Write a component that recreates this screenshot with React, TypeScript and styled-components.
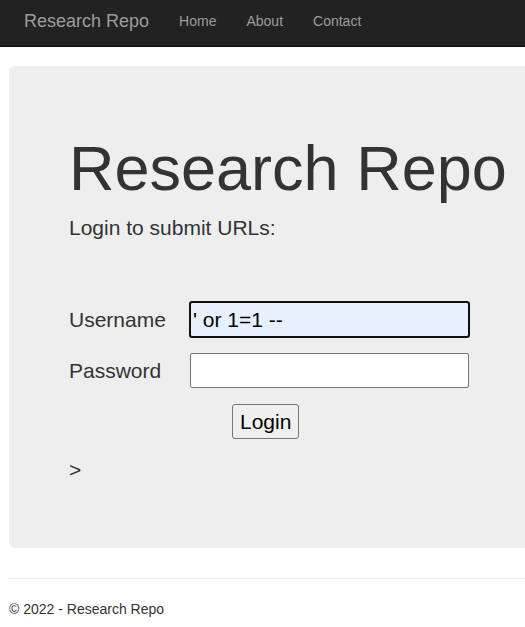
import React from "react";
import styled, { createGlobalStyle } from "styled-components";

const Global = createGlobalStyle`
  html, body { margin: 0; padding: 0; overflow-x: hidden; }
  body {
    font-family: "Liberation Sans", Arial, Helvetica, sans-serif;
    font-size: 14px;
    line-height: 1.42857;
    color: #333;
    background: #fff;
  }
  * { box-sizing: border-box; }
`;

const Navbar = styled.nav`
  height: 47px;
  background: #222;
  border-bottom: 1px solid #080808;
  display: flex;
  align-items: center;
  padding-left: 9px;
`;

const Brand = styled.a`
  font-size: 18px;
  color: #9d9d9d;
  padding: 0 15px;
  text-decoration: none;
  line-height: 20px;
  margin-top: -4px;
`;

const NavLink = styled.a`
  font-size: 14px;
  color: #9d9d9d;
  padding: 0 15px;
  text-decoration: none;
  line-height: 20px;
  margin-top: -4px;
`;

const Container = styled.div`
  padding-left: 9px;
  width: 560px;
`;

const Jumbotron = styled.div`
  margin-top: 19px;
  background: #eee;
  border-radius: 6px;
  padding: 48px 60px 43px 60px;
`;

const Title = styled.h1`
  font-size: 63px;
  font-weight: 500;
  line-height: 1.1;
  margin: 20px 0 10px;
  color: #333;
  white-space: nowrap;
`;

const Lead = styled.p`
  font-size: 21px;
  font-weight: 200;
  margin: 0 0 15px;
`;

const Form = styled.form`
  margin-top: 59px;
  display: grid;
  grid-template-columns: 121px 279px;
  row-gap: 16px;
  align-items: center;
  font-size: 21px;
`;

const Label = styled.label`
  font-size: 21px;
`;

const Input = styled.input<{ $focused?: boolean }>`
  width: 279px;
  height: 35px;
  font-family: "Liberation Sans", Arial, sans-serif;
  font-size: 21px;
  padding: 1px 2px;
  color: #000;
  border-radius: 2px;
  border: 1px solid #767676;
  background: ${(p) => (p.$focused ? "#e8f0fe" : "#fff")};
  outline: ${(p) => (p.$focused ? "2px solid #101010" : "none")};
  outline-offset: -1px;
`;

const ButtonCell = styled.div`
  grid-column: 2;
  padding-left: 42px;
`;

const Button = styled.button`
  font-family: "Liberation Sans", Arial, sans-serif;
  font-size: 21px;
  height: 35px;
  padding: 1px 7px;
  background: #efefef;
  color: #000;
  border: 1px solid #767676;
  border-radius: 3px;
`;

const Result = styled.div`
  font-size: 21px;
  margin-top: 16px;
  margin-bottom: 20px;
`;

const Rule = styled.hr`
  border: 0;
  border-top: 1px solid #eee;
  margin: 30px 0 21px;
`;

const Footer = styled.footer`
  font-size: 14px;
  p { margin: 0; }
`;

export default function App() {
  return (
    <>
      <Global />
      <Navbar>
        <Brand href="#">Research Repo</Brand>
        <NavLink href="#">Home</NavLink>
        <NavLink href="#">About</NavLink>
        <NavLink href="#">Contact</NavLink>
      </Navbar>
      <Container>
        <Jumbotron>
          <Title>Research Repo</Title>
          <Lead>Login to submit URLs:</Lead>
          <Form onSubmit={(e) => e.preventDefault()}>
            <Label>Username</Label>
            <Input $focused defaultValue="' or 1=1 --" />
            <Label>Password</Label>
            <Input type="password" />
            <ButtonCell>
              <Button type="submit">Login</Button>
            </ButtonCell>
          </Form>
          <Result>&gt;</Result>
        </Jumbotron>
        <Rule />
        <Footer>
          <p>© 2022 - Research Repo</p>
        </Footer>
      </Container>
    </>
  );
}
